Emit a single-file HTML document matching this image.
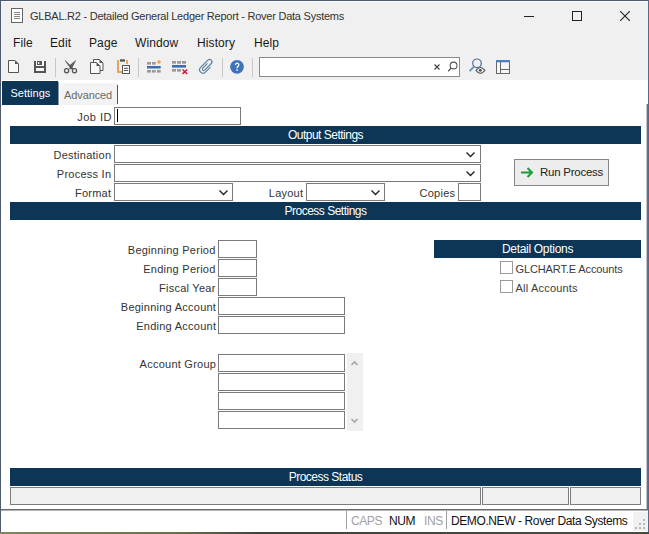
<!DOCTYPE html>
<html><head><meta charset="utf-8">
<style>
*{box-sizing:border-box;margin:0;padding:0}
html,body{width:649px;height:534px;overflow:hidden;background:#fff}
body{position:relative;font-family:"Liberation Sans",sans-serif;color:#222}
.a{position:absolute}
.t{position:absolute;white-space:pre;line-height:1}
.lbl{position:absolute;white-space:pre;font-size:11px;line-height:1;color:#333;text-align:right;letter-spacing:0.25px}
.inp{position:absolute;border:1px solid #7a7a7a;background:#fff}
.band{position:absolute;left:10px;width:631px;height:18px;background:#0c3556;color:#fff;font-size:12px;letter-spacing:-0.5px;text-align:center;line-height:18px}
.chev{position:absolute;width:9px;height:6px}
</style></head><body>
<!-- window frame -->
<div class="a" style="left:0;top:0;width:649px;height:534px;background:#f0f0f0"></div>
<!-- title bar -->
<svg class="a" style="left:11px;top:8px" width="13" height="15" viewBox="0 0 13 15">
<rect x="0.5" y="0.5" width="11" height="14" fill="#fff" stroke="#666" stroke-width="1"/>
<path d="M3 4.5h6M3 6.5h6M3 8.5h6M3 10.5h6" stroke="#888" stroke-width="1"/>
</svg>
<div class="t" style="left:30px;top:11px;font-size:11px;letter-spacing:-0.24px;color:#333">GLBAL.R2 - Detailed General Ledger Report - Rover Data Systems</div>
<div class="a" style="left:524px;top:16px;width:10px;height:1px;background:#222"></div>
<div class="a" style="left:572px;top:11px;width:10px;height:10px;border:1px solid #222"></div>
<svg class="a" style="left:620px;top:11px" width="10" height="10" viewBox="0 0 10 10"><path d="M0 0L10 10M10 0L0 10" stroke="#222" stroke-width="1.1"/></svg>
<!-- menu -->
<div class="t" style="left:13px;top:37px;font-size:12px;letter-spacing:0.1px;color:#1a1a1a">File</div>
<div class="t" style="left:50px;top:37px;font-size:12px;letter-spacing:0.1px;color:#1a1a1a">Edit</div>
<div class="t" style="left:89px;top:37px;font-size:12px;letter-spacing:0.1px;color:#1a1a1a">Page</div>
<div class="t" style="left:135px;top:37px;font-size:12px;letter-spacing:0.1px;color:#1a1a1a">Window</div>
<div class="t" style="left:197px;top:37px;font-size:12px;letter-spacing:0.1px;color:#1a1a1a">History</div>
<div class="t" style="left:254px;top:37px;font-size:12px;letter-spacing:0.1px;color:#1a1a1a">Help</div>
<!-- toolbar -->
<div class="inp" style="left:259px;top:57px;width:201px;height:20px;border-color:#8a8a8a"></div>
<svg class="a" style="left:0;top:54px" width="520" height="26" viewBox="0 54 520 26">
<!-- new -->
<path d="M8.5 60.5H15L18.5 64V72.5H8.5Z" fill="#f8f8f8" stroke="#555" stroke-width="1"/>
<path d="M15 60.5V64H18.5Z" fill="#555"/>
<!-- save -->
<rect x="34" y="61" width="12" height="12" fill="#555"/>
<rect x="36" y="61" width="8" height="5" fill="#f8f8f8"/>
<rect x="37" y="61" width="5" height="4" fill="#555"/>
<rect x="38" y="62" width="1.3" height="2" fill="#f8f8f8"/>
<rect x="36" y="68" width="8" height="3" fill="#f8f8f8"/>
<!-- cut -->
<path d="M65 60L73.6 68.6L71.8 69.6L70.2 68L65 61Z" fill="#555"/>
<path d="M75.8 60L70.6 66.8L69.4 65.4Z" fill="#555"/>
<path d="M75.8 60L69 68.6L70.6 69.4L72.2 67.8L75.8 61Z" fill="#555"/>
<circle cx="66.6" cy="70.8" r="2.1" fill="none" stroke="#555" stroke-width="1.3"/>
<circle cx="74.5" cy="70.8" r="2.1" fill="none" stroke="#555" stroke-width="1.3"/>
<!-- copy -->
<path d="M93.5 59.5H99.5L103 63V70.5H93.5Z" fill="#f8f8f8" stroke="#555" stroke-width="1"/>
<path d="M99.5 59.5V63H103Z" fill="#555"/>
<path d="M90.5 62.5H96.5L100 66V73.5H90.5Z" fill="#f8f8f8" stroke="#555" stroke-width="1"/>
<path d="M96.5 62.5V66H100Z" fill="#555"/>
<!-- paste -->
<path d="M118 60V72H122" fill="none" stroke="#e3a65a" stroke-width="2"/>
<path d="M127 60V64" fill="none" stroke="#e3a65a" stroke-width="2"/>
<rect x="120" y="59.3" width="5" height="2.3" fill="#555"/>
<rect x="122.5" y="65.5" width="7" height="8" fill="#fafafa" stroke="#555" stroke-width="1"/>
<path d="M124 68.3H128M124 70.5H128" stroke="#555" stroke-width="1"/>
<!-- insert row -->
<rect x="147" y="62" width="4" height="2.6" fill="#9a9a9a"/>
<rect x="152" y="62" width="3.7" height="2.6" fill="#9a9a9a"/>
<circle cx="159" cy="62" r="1.8" fill="#eca050"/>
<rect x="147" y="66" width="13.7" height="2.5" fill="#3b6db0"/>
<rect x="147" y="70" width="4" height="2.6" fill="#9a9a9a"/>
<rect x="152" y="70" width="3.7" height="2.6" fill="#9a9a9a"/>
<rect x="157" y="70" width="3.7" height="2.6" fill="#9a9a9a"/>
<!-- delete row -->
<rect x="172" y="61" width="4" height="2.7" fill="#9a9a9a"/>
<rect x="177" y="61" width="4" height="2.7" fill="#9a9a9a"/>
<rect x="182" y="61" width="4" height="2.7" fill="#9a9a9a"/>
<rect x="172" y="65" width="14" height="2.6" fill="#3b6db0"/>
<rect x="172" y="69" width="4" height="2.7" fill="#9a9a9a"/>
<rect x="177" y="69" width="4" height="2.7" fill="#9a9a9a"/>
<path d="M182.5 69.5L187.2 73.8M187.2 69.5L182.5 73.8" stroke="#d3203c" stroke-width="1.6"/>
<!-- clip -->
<g transform="translate(206.3 66.5) rotate(45)" fill="none" stroke="#5b7ea6" stroke-width="1.15">
<path d="M3.4 -2.5V4.6A3.4 3.4 0 0 1 -3.4 4.6V-5.6A2.4 2.4 0 0 1 1.4 -5.6V3.6A1.4 1.4 0 0 1 -1.4 3.6V-3"/>
</g>
<!-- help -->
<circle cx="237" cy="66.8" r="6.9" fill="#3d73b9"/>
<path d="M235.4 64.9A1.7 1.7 0 1 1 238.1 66.3C237.4 66.8 237 67.1 237 68.2" fill="none" stroke="#fff" stroke-width="1.3"/>
<rect x="236.3" y="69.3" width="1.5" height="1.5" fill="#fff"/>
<!-- search x + magnifier -->
<path d="M434.5 64.5L439.5 69.5M439.5 64.5L434.5 69.5" stroke="#444" stroke-width="1.2"/>
<circle cx="453.6" cy="65.5" r="3.4" fill="none" stroke="#555" stroke-width="1.1"/>
<path d="M451.2 68L448.2 71.3" stroke="#555" stroke-width="1.3"/>
<!-- search-eye -->
<circle cx="477" cy="63.3" r="4.3" fill="none" stroke="#4d6f96" stroke-width="1.2"/>
<path d="M474 66.6L469.6 71.2" stroke="#5b8fd0" stroke-width="1.8"/>
<path d="M476 70.4Q480.4 64.6 484.8 70.4Q480.4 76.2 476 70.4Z" fill="#fff" stroke="#5a5a5a" stroke-width="1.2"/>
<circle cx="480.3" cy="70.3" r="1.5" fill="#555"/>
<!-- layout -->
<rect x="496.5" y="60.5" width="13" height="13" fill="#f6f6f6" stroke="#666" stroke-width="1"/>
<rect x="496" y="60" width="14" height="2.3" fill="#4a80c4"/>
<path d="M500.5 62V73M500.5 69.5H509" stroke="#666" stroke-width="1"/>
</svg>
<div class="a" style="left:55px;top:58px;width:1px;height:19px;background:#c8c8c8"></div>
<div class="a" style="left:138px;top:58px;width:1px;height:19px;background:#c8c8c8"></div>
<div class="a" style="left:222px;top:58px;width:1px;height:19px;background:#c8c8c8"></div>
<div class="a" style="left:252px;top:58px;width:1px;height:19px;background:#c8c8c8"></div>
<!-- content -->
<div class="a" style="left:1px;top:80px;width:647px;height:430px;background:#fff"></div>
<div class="a" style="left:646px;top:104px;width:1px;height:406px;background:#c4c4c4"></div><div class="a" style="left:647px;top:104px;width:1px;height:406px;background:#6c7272"></div>
<!-- tabs -->
<div class="a" style="left:2px;top:81px;width:56px;height:24px;background:#0c3556"></div><div class="a" style="left:58px;top:82px;width:1px;height:23px;background:#7f97ab"></div>
<div class="t" style="left:10.5px;top:88px;font-size:11px;letter-spacing:0px;color:#fff">Settings</div>
<div class="a" style="left:60px;top:83px;width:58px;height:22px;background:#f3f3f3"></div>
<div class="a" style="left:117px;top:85px;width:1px;height:19px;background:#555"></div>
<div class="t" style="left:64px;top:90px;font-size:11px;letter-spacing:-0.1px;color:#6a6a6a">Advanced</div>
<!-- job id -->
<div class="lbl" style="left:0;width:112px;top:112px;letter-spacing:0.5px">Job ID</div>
<div class="inp" style="left:114px;top:107px;width:127px;height:18px"></div>
<div class="a" style="left:117px;top:109px;width:1px;height:13px;background:#000"></div>
<!-- output settings -->
<div class="band" style="top:126px">Output Settings</div>
<div class="lbl" style="left:0;width:111.3px;top:150px">Destination</div>
<div class="inp" style="left:114px;top:145px;width:367px;height:18px"></div>
<div class="lbl" style="left:0;width:111.3px;top:169px">Process In</div>
<div class="inp" style="left:114px;top:164px;width:367px;height:18px"></div>
<div class="lbl" style="left:0;width:111.3px;top:188px">Format</div>
<div class="inp" style="left:114px;top:183px;width:119px;height:18px"></div>
<div class="lbl" style="left:200px;width:103.3px;top:188px">Layout</div>
<div class="inp" style="left:306px;top:183px;width:79px;height:18px"></div>
<div class="lbl" style="left:350px;width:105.3px;top:188px">Copies</div>
<div class="inp" style="left:458px;top:183px;width:23px;height:18px"></div>
<svg class="chev" style="left:466px;top:152px" viewBox="0 0 9 6"><path d="M0.5 0.5L4.5 4.5L8.5 0.5" fill="none" stroke="#222" stroke-width="1.35"/></svg>
<svg class="chev" style="left:466px;top:171px" viewBox="0 0 9 6"><path d="M0.5 0.5L4.5 4.5L8.5 0.5" fill="none" stroke="#222" stroke-width="1.35"/></svg>
<svg class="chev" style="left:219px;top:190px" viewBox="0 0 9 6"><path d="M0.5 0.5L4.5 4.5L8.5 0.5" fill="none" stroke="#222" stroke-width="1.35"/></svg>
<svg class="chev" style="left:371px;top:190px" viewBox="0 0 9 6"><path d="M0.5 0.5L4.5 4.5L8.5 0.5" fill="none" stroke="#222" stroke-width="1.35"/></svg>
<!-- run process -->
<div class="a" style="left:514px;top:159px;width:95px;height:27px;background:#ededed;border:1px solid #858585"></div>
<svg class="a" style="left:520px;top:167px" width="14" height="11" viewBox="0 0 14 11"><path d="M1 5.5H12M7.5 1L12 5.5L7.5 10" fill="none" stroke="#1a9e3a" stroke-width="2"/></svg>
<div class="t" style="left:540px;top:167px;font-size:11.5px;letter-spacing:-0.25px;color:#222">Run Process</div>
<!-- process settings -->
<div class="band" style="top:202px">Process Settings</div>
<div class="lbl" style="left:0;width:215.6px;top:245px">Beginning Period</div>
<div class="inp" style="left:218px;top:240px;width:39px;height:18px"></div>
<div class="lbl" style="left:0;width:215.6px;top:264px">Ending Period</div>
<div class="inp" style="left:218px;top:259px;width:39px;height:18px"></div>
<div class="lbl" style="left:0;width:215.6px;top:283px">Fiscal Year</div>
<div class="inp" style="left:218px;top:278px;width:39px;height:18px"></div>
<div class="lbl" style="left:0;width:216.2px;top:302px">Beginning Account</div>
<div class="inp" style="left:218px;top:297px;width:127px;height:18px"></div>
<div class="lbl" style="left:0;width:216.2px;top:321px">Ending Account</div>
<div class="inp" style="left:218px;top:316px;width:127px;height:18px"></div>
<div class="lbl" style="left:0;width:216.2px;top:359px">Account Group</div>
<div class="inp" style="left:218px;top:354px;width:127px;height:18px"></div>
<div class="inp" style="left:218px;top:373px;width:127px;height:18px"></div>
<div class="inp" style="left:218px;top:392px;width:127px;height:18px"></div>
<div class="inp" style="left:218px;top:411px;width:127px;height:18px"></div>
<div class="a" style="left:347px;top:353px;width:16px;height:78px;background:#f0f0f0"></div>
<svg class="a" style="left:350px;top:360px" width="9" height="6" viewBox="0 0 9 6"><path d="M1.5 5L4.5 2L7.5 5" fill="none" stroke="#a6a6a6" stroke-width="1.6"/></svg>
<svg class="a" style="left:350px;top:418px" width="9" height="6" viewBox="0 0 9 6"><path d="M1.5 1L4.5 4L7.5 1" fill="none" stroke="#a6a6a6" stroke-width="1.6"/></svg>
<!-- detail options -->
<div class="band" style="left:434px;width:207px;top:240px;letter-spacing:-0.3px">Detail Options</div>
<div class="a" style="left:500px;top:261px;width:13px;height:13px;border:1px solid #9a9a9a;background:#fff"></div>
<div class="t" style="left:515.5px;top:264px;font-size:11px;letter-spacing:-0.12px;color:#3a3a3a">GLCHART.E Accounts</div>
<div class="a" style="left:500px;top:280px;width:13px;height:13px;border:1px solid #9a9a9a;background:#fff"></div>
<div class="t" style="left:515.5px;top:283px;font-size:11px;letter-spacing:0.2px;color:#3a3a3a">All Accounts</div>
<!-- process status -->
<div class="band" style="top:468px">Process Status</div>
<div class="a" style="left:10px;top:487px;width:471px;height:18px;background:#f0f0f0;border:1px solid #7c7c7c"></div>
<div class="a" style="left:482px;top:487px;width:87px;height:18px;background:#f0f0f0;border:1px solid #7c7c7c"></div>
<div class="a" style="left:570px;top:487px;width:71px;height:18px;background:#f0f0f0;border:1px solid #7c7c7c"></div>
<!-- status bar -->
<div class="a" style="left:1px;top:509px;width:647px;height:1px;background:#6a6a6a"></div><div class="a" style="left:1px;top:510px;width:647px;height:1px;background:#b4b4b4"></div>
<div class="a" style="left:1px;top:511px;width:647px;height:21px;background:#fff"></div><div class="a" style="left:633px;top:512px;width:15px;height:19px;background:#f1f1f1"></div>
<div class="a" style="left:346px;top:511px;width:1px;height:18px;background:#a0a0a0"></div>
<div class="a" style="left:446px;top:511px;width:1px;height:18px;background:#a0a0a0"></div>
<div class="t" style="left:351px;top:515px;font-size:12px;letter-spacing:-0.4px;color:#a0a0a0">CAPS</div>
<div class="t" style="left:389px;top:515px;font-size:12px;letter-spacing:-0.4px;color:#111">NUM</div>
<div class="t" style="left:424px;top:515px;font-size:12px;letter-spacing:-0.4px;color:#a0a0a0">INS</div>
<div class="t" style="left:451px;top:515px;font-size:12px;letter-spacing:-0.4px;color:#111">DEMO.NEW - Rover Data Systems</div>
<svg class="a" style="left:633px;top:517px" width="14" height="14" viewBox="0 0 14 14" fill="#b8b8b8">
<rect x="10" y="2" width="2" height="2"/><rect x="6" y="6" width="2" height="2"/><rect x="10" y="6" width="2" height="2"/>
<rect x="2" y="10" width="2" height="2"/><rect x="6" y="10" width="2" height="2"/><rect x="10" y="10" width="2" height="2"/>
</svg>
<!-- frame borders -->
<div class="a" style="left:0;top:0;width:649px;height:1px;background:#4f5a6e"></div><div class="a" style="left:1px;top:1px;width:647px;height:1px;background:#f8fbff"></div>
<div class="a" style="left:0;top:0;width:1px;height:532px;background:#4f5a6e"></div>
<div class="a" style="left:648px;top:0;width:1px;height:532px;background:#5a6890"></div>
<div class="a" style="left:0;top:532px;width:649px;height:2px;background:linear-gradient(90deg,#7b8660 0,#66704f 180px,#3e4438 260px,#474c40 649px)"></div>
</body></html>
